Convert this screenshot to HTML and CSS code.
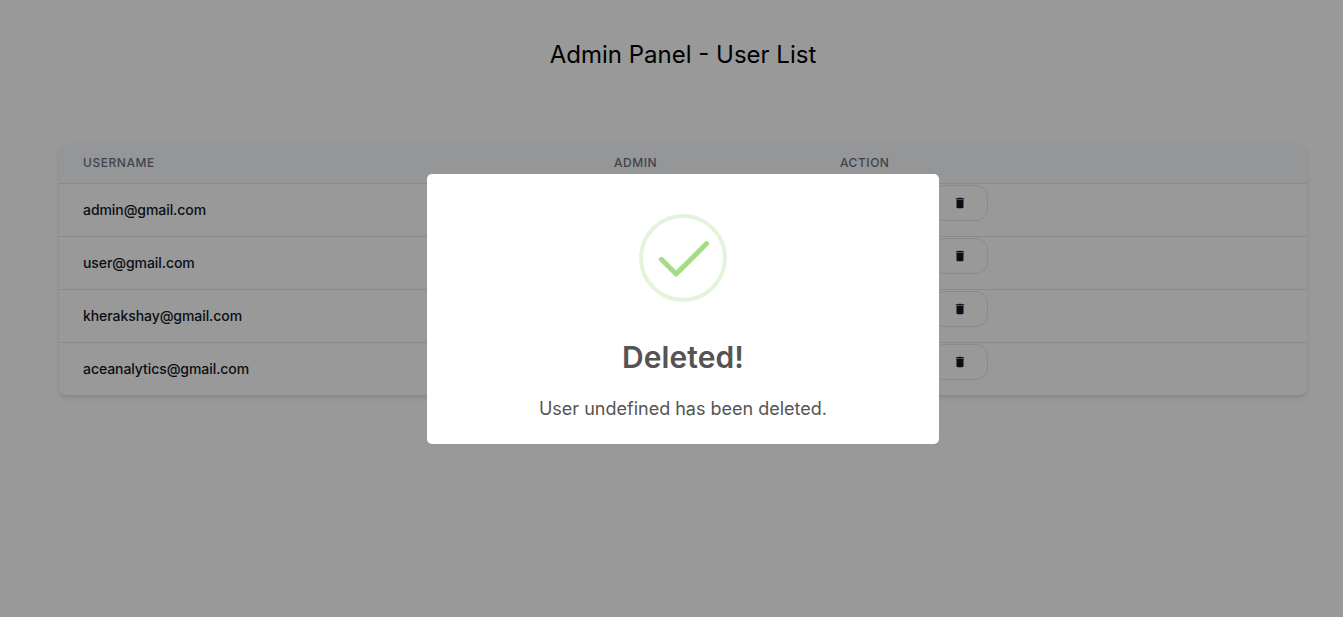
FILE: index.html
```
<!DOCTYPE html>
<html lang="en">
<head>
<meta charset="utf-8">
<title>Admin Panel</title>
<link rel="stylesheet" href="styles.css">
</head>
<body>
<svg class="sprite" aria-hidden="true"><symbol id="trash" viewBox="0 0 24 24"><path d="M6 19c0 1.1.9 2 2 2h8c1.1 0 2-.9 2-2V7H6v12zM19 4h-3.500l-1-1h-5l-1 1H5v2h14V4z"/></symbol></svg>
<main class="page">
  <h1 class="heading"><span>Admin Panel - User List</span></h1>
  <section class="users">
    <div class="row head"><div>Username</div><div>Admin</div><div>Action</div></div>
    <div class="row"><div class="name"><span>admin@gmail.com</span></div><div></div><div class="action"><button class="delete" aria-label="Delete"><svg><use href="#trash"/></svg></button></div></div>
    <div class="row"><div class="name"><span>user@gmail.com</span></div><div></div><div class="action"><button class="delete" aria-label="Delete"><svg><use href="#trash"/></svg></button></div></div>
    <div class="row"><div class="name"><span>kherakshay@gmail.com</span></div><div></div><div class="action"><button class="delete" aria-label="Delete"><svg><use href="#trash"/></svg></button></div></div>
    <div class="row"><div class="name"><span>aceanalytics@gmail.com</span></div><div></div><div class="action"><button class="delete" aria-label="Delete"><svg><use href="#trash"/></svg></button></div></div>
  </section>
</main>
<div class="backdrop">
  <div class="dialog" role="dialog">
    <svg class="success" viewBox="0 0 88 88"><circle cx="44" cy="44" r="42"/><path d="M22.300 45.300 37.100 60.100 67.600 29.600"/></svg>
    <h2 class="title"><span>Deleted!</span></h2>
    <p class="message"><span>User undefined has been deleted.</span></p>
  </div>
</div>
</body>
</html>
```
FILE: styles.css
```
* { box-sizing: border-box; }
body { margin: 0; height: 617px; overflow: hidden; background: #fff; font-family: Inter, sans-serif; color: #000; }
h1, h2, p { margin: 0; }
.sprite { display: none; }
.page { padding: 39px 36px 0 59px; }
.heading { font-size: 24px; line-height: 32px; font-weight: 400; text-align: center; }
.users { margin-top: 72px; border-radius: 8px; overflow: hidden; box-shadow: 0 4px 6px -1px rgba(0,0,0,.1), 0 2px 4px -1px rgba(0,0,0,.06); }
.row { display: grid; grid-template-columns: 531px 226px 1fr; height: 53px; border-bottom: 1px solid #e5e7eb; }
.row:last-child { height: 52px; border-bottom: 0; }
.row > div { padding: 0 24px; }
.row.head { height: 41px; background: #f8fafc; align-items: center; font-size: 12px; line-height: 16px; font-weight: 500; letter-spacing: 0.54px; text-transform: uppercase; color: #6b7280; }
.row .name { align-self: center; font-size: 14px; line-height: 20px; font-weight: 500; letter-spacing: -0.07px; color: #111827; }
.row .action { display: flex; align-items: flex-start; padding: 1px 24px 0 92px; }
.delete { display: flex; align-items: center; justify-content: center; width: 56px; height: 36px; margin-left: 24px; padding: 0; border: 1px solid #e5e7eb; border-radius: 12px; background: transparent; color: #111827; }
.delete svg { width: 14px; height: 14px; fill: currentColor; }
.backdrop { position: fixed; inset: 0; display: flex; align-items: center; justify-content: center; padding: 1px 0 0 23px; background: rgba(0,0,0,.4); }
.dialog { width: 512px; height: 270px; padding-top: 40px; border-radius: 5px; background: #fff; text-align: center; }
.success { display: block; width: 88px; height: 88px; margin: 0 auto; fill: none; stroke-width: 4; stroke: #e4f4db; }
.success path { stroke: #a5dc86; stroke-width: 5; stroke-linecap: round; stroke-linejoin: round; }
.title { margin-top: 33px; font-size: 30px; line-height: 45px; font-weight: 600; letter-spacing: 0.1px; color: #545454; }
.message { margin-top: 15px; font-size: 18px; line-height: 28px; color: #545454; }
```
